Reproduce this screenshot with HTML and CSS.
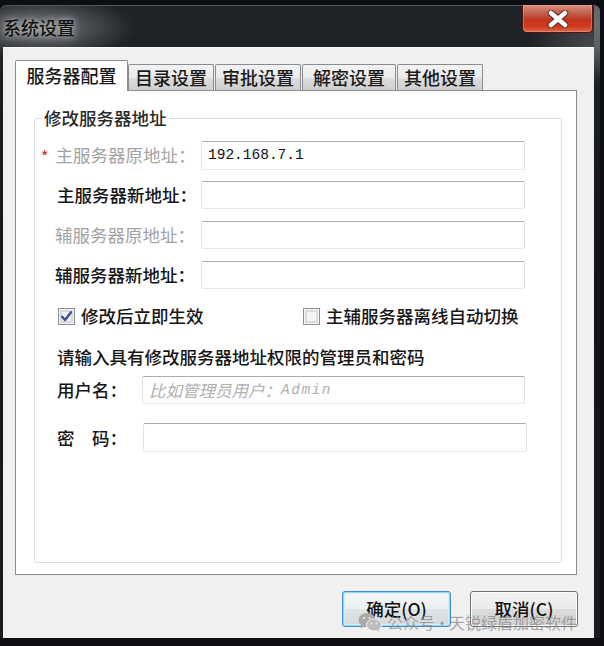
FILE: index.html
```html
<!DOCTYPE html>
<html lang="zh-CN">
<head>
<meta charset="utf-8">
<title>系统设置</title>
<link rel="stylesheet" href="styles.css">
</head>
<body>
<div class="screen">
  <div class="window">
    <div class="titlebar">
      <span class="title">系统设置</span>
      <div class="close">
        <svg width="26" height="18" viewBox="0 0 26 18">
          <path d="M6 3 L20 15 M20 3 L6 15" stroke="#5a2a22" stroke-width="6.5" stroke-linecap="round"/>
          <path d="M6 3 L20 15 M20 3 L6 15" stroke="#ffffff" stroke-width="4.5" stroke-linecap="round"/>
        </svg>
      </div>
    </div>
    <div class="client">
      <div class="tabs">
        <div class="tab active">服务器配置</div>
        <div class="tab t2">目录设置</div>
        <div class="tab t3">审批设置</div>
        <div class="tab t4">解密设置</div>
        <div class="tab t5">其他设置</div>
      </div>
      <div class="panel">
        <fieldset class="group">
          <legend>修改服务器地址</legend>
          <div class="group-body">
            <div class="row">
              <span class="label disabled required">主服务器原地址：</span>
              <div class="input value">192.168.7.1</div>
            </div>
            <div class="row">
              <span class="label">主服务器新地址：</span>
              <div class="input"></div>
            </div>
            <div class="row">
              <span class="label disabled shift">辅服务器原地址：</span>
              <div class="input"></div>
            </div>
            <div class="row">
              <span class="label shift">辅服务器新地址：</span>
              <div class="input"></div>
            </div>
            <div class="checks">
              <div class="check first">
                <span class="box">
                  <svg width="13" height="13" viewBox="0 0 13 13"><path d="M2.2 6.8 L5 10 L11 2.2" fill="none" stroke="#3a4f96" stroke-width="2.4" stroke-linejoin="round" stroke-linecap="round"/></svg>
                </span>
                <span>修改后立即生效</span>
              </div>
              <div class="check">
                <span class="box"></span>
                <span>主辅服务器离线自动切换</span>
              </div>
            </div>
            <div class="hint">请输入具有修改服务器地址权限的管理员和密码</div>
            <div class="row cred user">
              <span class="label">用户名：</span>
              <div class="input placeholder">比如管理员用户：<span class="latin">Admin</span></div>
            </div>
            <div class="row cred pwd">
              <span class="label">密　码：</span>
              <div class="input"></div>
            </div>
          </div>
        </fieldset>
      </div>
      <div class="buttons">
        <div class="btn default">确定(O)</div>
        <div class="btn">取消(C)</div>
      </div>
      <div class="watermark">
        <svg width="24" height="20" viewBox="0 0 24 20">
          <ellipse cx="9" cy="8" rx="8.5" ry="7" fill="#a9a9a9"/>
          <path d="M3.5 12.5 L2.5 16.5 L7 14" fill="#a9a9a9"/>
          <ellipse cx="16" cy="13" rx="7.5" ry="6" fill="#bdbdbd" stroke="#f0f0f0" stroke-width="1"/>
          <path d="M20.5 16.5 L22 19.5 L18 18" fill="#bdbdbd"/>
          <circle cx="6" cy="6" r="1.1" fill="#f0f0f0"/>
          <circle cx="11.5" cy="6" r="1.1" fill="#f0f0f0"/>
          <circle cx="13.5" cy="11.5" r="0.9" fill="#f0f0f0"/>
          <circle cx="18.5" cy="11.5" r="0.9" fill="#f0f0f0"/>
        </svg>
        <span>公众号<span class="dot">·</span>天锐绿盾加密软件</span>
      </div>
    </div>
  </div>
</div>
</body>
</html>
```
FILE: styles.css
```css
* { box-sizing: border-box; }
html, body { margin: 0; padding: 0; }
body {
  background: #0c0e12;
  font-family: "Noto Sans CJK SC", "Noto Sans", sans-serif;
  color: #1a1a1a;
}
.screen {
  width: 604px;
  height: 646px;
  padding-top: 5px;
  background: #0c0e12;
  overflow: hidden;
}
.window {
  width: 600px;
  height: 633px;
  border-radius: 6px 6px 0 0;
  border-top: 1px solid #55585d;
  background:
    linear-gradient(180deg, rgba(150,152,156,0.55) 20px, rgba(60,62,66,0) 70px) right 0 top 0 / 6px 100% no-repeat,
    radial-gradient(ellipse 95px 32px at 40px 22px, rgba(175,177,181,0.6), rgba(90,92,96,0) 100%),
    radial-gradient(ellipse 60px 40px at 590px 40px, rgba(120,122,126,0.45), rgba(60,62,66,0) 100%),
    linear-gradient(180deg, #202328 0%, #121418 45%, #1a1c20 100%);
  display: flex;
  flex-direction: column;
}
.titlebar {
  height: 41px;
  display: flex;
  justify-content: space-between;
  align-items: flex-start;
}
.title {
  align-self: center;
  margin-left: 3px;
  font-size: 18px;
  line-height: 24px;
  font-weight: 500;
  color: #111111;
  text-shadow: 0 0 6px rgba(230,230,230,0.75), 0 0 12px rgba(210,210,210,0.55);
}
.close {
  margin-right: 7px;
  margin-top: -1px;
  width: 71px;
  height: 28px;
  border: 1px solid #4a1a12;
  border-top: none;
  border-radius: 0 0 5px 5px;
  background: linear-gradient(180deg, #d9907e 0%, #c4604c 30%, #b8412c 50%, #c9311b 55%, #cf3a22 80%, #dc6a4c 100%);
  box-shadow: inset 0 0 0 1px rgba(255,190,170,0.35);
  display: flex;
  align-items: center;
  justify-content: center;
}
.client {
  position: relative;
  margin-left: 3px;
  width: 591px;
  height: 591px;
  background: #f0f0f0;
  border-top: 1px solid #fbfbfb;
  padding: 12px 0 0 12px;
}
.tabs {
  display: flex;
  align-items: flex-end;
  height: 30px;
  position: relative;
  z-index: 1;
}
.tab {
  height: 26px;
  border: 1px solid #898c95;
  border-bottom: none;
  background: linear-gradient(180deg, #f2f2f2 0%, #ebebeb 50%, #dddddd 51%, #cfcfcf 100%);
  font-size: 18px;
  font-weight: 500;
  line-height: 24px;
  text-align: center;
  color: #1a1a1a;
  border-radius: 2px 2px 0 0;
}
.tab.active {
  width: 113px;
  height: 31px;
  margin-bottom: -1px;
  background: #ffffff;
  line-height: 29px;
}
.tab.t2 { width: 86px; }
.tab.t3 { width: 86px; margin-left: 1px; }
.tab.t4 { width: 94px; margin-left: 1px; }
.tab.t5 { width: 86px; margin-left: 1px; }
.panel {
  width: 562px;
  height: 485px;
  background: #ffffff;
  border: 1px solid #898c95;
  padding: 15px 14px 11px 18px;
  display: flex;
  flex-direction: column;
}
.group {
  flex: 1;
  margin: 0;
  padding: 0;
  min-width: 0;
  border: 1px solid #d5dfe5;
  border-radius: 3px;
}
.group legend {
  margin-left: 7px;
  padding: 0 2px;
  font-size: 17.5px;
  font-weight: 500;
  line-height: 24px;
  color: #2a2a2a;
}
.group-body {
  display: flex;
  flex-direction: column;
  padding-top: 11px;
}
.row {
  display: flex;
  align-items: center;
  height: 28px;
  padding-left: 22px;
  margin-bottom: 12px;
}
.label {
  width: 144px;
  font-size: 17.5px;
  font-weight: 500;
  line-height: 22px;
  color: #161616;
  white-space: nowrap;
}
.label.shift { margin-left: -2px; margin-right: 2px; }
.label.disabled { color: #a2a2a2; font-weight: 400; }
.label.required::before {
  content: "*";
  color: #e0201c;
  font-size: 16px;
  margin-left: -16px;
  margin-right: 7px;
  position: relative;
  top: 1px;
}
.input {
  width: 324px;
  height: 28px;
  background: #ffffff;
  border: 1px solid;
  border-color: #abadb3 #dbdfe6 #e3e9ef #e2e3ea;
  border-radius: 2px;
  padding: 0 6px;
  display: flex;
  align-items: center;
  white-space: nowrap;
}
.input.value {
  height: 29px;
  font-family: "Liberation Mono", "DejaVu Sans Mono", monospace;
  font-size: 14.5px;
  color: #111;
}
.checks {
  display: flex;
  align-items: center;
  height: 20px;
  padding-left: 23px;
  margin-top: 5px;
}
.check {
  display: flex;
  align-items: center;
  gap: 6px;
  font-size: 17.5px;
  font-weight: 500;
  line-height: 20px;
  color: #161616;
}
.check.first { width: 245px; }
.box {
  width: 17px;
  height: 17px;
  border: 1px solid #8e8f8f;
  background: #f4f4f4;
  box-shadow: inset 0 0 0 1px #f7f7f7, inset 0 0 0 3px #dcdcdc;
  display: flex;
  align-items: center;
  justify-content: center;
}
.box svg { position: relative; z-index: 1; }
.check.first .box {
  background: #eef0f6;
  box-shadow: inset 0 0 0 1px #f4f4f4, inset 0 0 0 3px #d7dae2;
}
.hint {
  margin-top: 20px;
  padding-left: 22px;
  font-size: 17.5px;
  font-weight: 500;
  line-height: 22px;
  color: #161616;
}
.row.cred { margin-bottom: 0; }
.row.cred .label { width: 85px; }
.row.cred .input { width: 383px; }
.row.user { margin-top: 8px; }
.row.pwd { margin-top: 19px; height: 29px; }
.row.pwd .input { height: 29px; width: 384px; margin-left: 1px; }
.placeholder {
  font-size: 16.5px;
  font-style: italic;
  color: #b0b0b0;
}
.placeholder .latin {
  font-family: "Liberation Mono", "DejaVu Sans Mono", monospace;
  font-size: 14.5px;
  letter-spacing: 1.5px;
}
.buttons {
  display: flex;
  justify-content: flex-end;
  gap: 19px;
  padding-right: 16px;
  margin-top: 16px;
}
.btn {
  width: 108px;
  height: 36px;
  border: 1px solid #707070;
  border-radius: 3px;
  background: linear-gradient(180deg, #f2f2f2 0%, #ebebeb 50%, #dddddd 51%, #cfcfcf 100%);
  box-shadow: inset 0 0 0 1px #fcfcfc;
  font-size: 17.5px;
  font-weight: 500;
  line-height: 34px;
  text-align: center;
  color: #111;
}
.btn.default {
  width: 109px;
  border-color: #3c8ed0;
  box-shadow: inset 0 0 0 1px #9fd5f3, inset 0 0 0 2px #d4eefb;
  background: linear-gradient(180deg, #f4f6f8 0%, #edf0f2 50%, #e0e4e7 51%, #d6dadd 100%);
}
.watermark {
  position: absolute;
  left: 355px;
  top: 563px;
  display: flex;
  align-items: center;
  gap: 5px;
  font-size: 16px;
  line-height: 22px;
  color: rgba(140,140,140,0.75);
  white-space: nowrap;
}
.watermark .dot { margin: 0 -1px; }
```
